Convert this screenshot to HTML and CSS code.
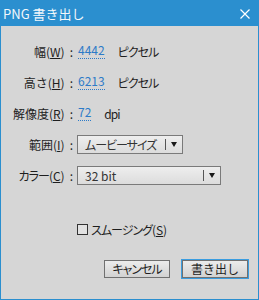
FILE: index.html
```html
<!DOCTYPE html>
<html lang="ja">
<head>
    <meta charset="UTF-8">
    <meta name="viewport" content="width=device-width, initial-scale=1.0">
    <title>PNG 書き出し</title>
    <link rel="stylesheet" href="styles.css">
</head>
<body>
    <div class="window">
        <div class="titlebar">
            <span class="title">PNG 書き出し</span>
            <svg class="close" width="10" height="10" viewBox="0 0 10 10">
                <path d="M0.5 0.5 L9.5 9.5 M9.5 0.5 L0.5 9.5" stroke="#ffffff" stroke-width="1.2" fill="none"/>
            </svg>
        </div>

        <div class="content">
            <div class="form">
                <label class="lbl">幅(<u>W</u>)<span class="colon">:</span></label>
                <div class="val"><span class="num">4442</span><span class="unit">ピクセル</span></div>

                <label class="lbl">高さ(<u>H</u>)<span class="colon">:</span></label>
                <div class="val"><span class="num">6213</span><span class="unit">ピクセル</span></div>

                <label class="lbl">解像度(<u>R</u>)<span class="colon">:</span></label>
                <div class="val"><span class="num">72</span><span class="unit">dpi</span></div>

                <label class="lbl">範囲(<u>I</u>)<span class="colon">:</span></label>
                <div class="val">
                    <div class="select short">
                        <span class="sel-text kana">ムービーサイズ</span>
                        <span class="sel-btn"><span class="tri"></span></span>
                    </div>
                </div>

                <label class="lbl"><span class="kana">カラー</span>(<u>C</u>)<span class="colon">:</span></label>
                <div class="val">
                    <div class="select long">
                        <span class="sel-text">32 bit</span>
                        <span class="sel-btn"><span class="tri"></span></span>
                    </div>
                </div>
            </div>

            <div class="check">
                <span class="box"></span>
                <span class="check-label"><span class="kana">スムージング</span>(<u>S</u>)</span>
            </div>

            <div class="buttons">
                <button class="btn kana">キャンセル</button>
                <button class="btn primary">書き出し</button>
            </div>
        </div>
    </div>
</body>
</html>
```

FILE: styles.css
```css
body {
    margin: 0;
    font-family: "Noto Sans CJK JP", "Noto Sans", sans-serif;
    font-size: 12px;
    color: #1e1e1e;
}
.window {
    width: 259px;
    height: 300px;
    box-sizing: border-box;
    border: 1px solid #2b8fcf;
    background: #d6d6d6;
}
.titlebar {
    height: 25px;
    background: #2b8fcf;
    display: flex;
    align-items: center;
    justify-content: space-between;
    padding: 0 9px 0 3px;
    margin: -1px -1px 0 -1px;
    border-top: 1px solid #2b8fcf;
}
.title {
    color: #f2f7fb;
    font-size: 13px;
}
.close {
    display: block;
}
.content {
    padding-top: 15px;
}
.form {
    display: grid;
    grid-template-columns: 72px 1fr;
    grid-auto-rows: 20px;
    row-gap: 11px;
    column-gap: 5px;
}
.lbl {
    display: flex;
    align-items: center;
    justify-content: flex-end;
    white-space: nowrap;
}
.colon {
    margin-left: 5px;
}
.val {
    display: flex;
    align-items: center;
}
.num {
    color: #2d7bc8;
    border-bottom: 1px dotted #2d7bc8;
    line-height: 14px;
    padding-bottom: 1px;
}
.unit {
    margin-left: 13px;
    font-feature-settings: "palt";
    letter-spacing: -1px;
}
.kana {
    font-feature-settings: "palt";
    letter-spacing: -1px;
}
.select {
    height: 19px;
    box-sizing: border-box;
    margin-left: -1px;
    border: 1px solid #7a7a7a;
    background: linear-gradient(#eeeeee, #dcdcdc);
    display: flex;
    align-items: center;
    color: #333;
}
.short {
    width: 106px;
}
.long {
    width: 144px;
}
.sel-text {
    flex: 1;
    padding-left: 7px;
    white-space: nowrap;
}
.sel-btn {
    width: 16px;
    height: 11px;
    border-left: 1px solid #555;
    display: flex;
    align-items: center;
    justify-content: center;
}
.tri {
    width: 0;
    height: 0;
    border-left: 3.5px solid transparent;
    border-right: 3.5px solid transparent;
    border-top: 5px solid #1a1a1a;
}
.check {
    display: flex;
    align-items: center;
    height: 16px;
    margin: 36px 0 0 76px;
}
.box {
    width: 11px;
    height: 11px;
    box-sizing: border-box;
    border: 1px solid #333;
    background: #e2e2e2;
    margin-right: 3px;
}
.buttons {
    display: flex;
    justify-content: flex-end;
    gap: 12px;
    margin-top: 23px;
    padding-right: 10px;
}
.btn {
    width: 66px;
    height: 18px;
    padding: 0;
    font-family: inherit;
    font-size: 12px;
    line-height: 14px;
    color: #1e1e1e;
    border: 1px solid #707070;
    background: linear-gradient(#ececec, #d2d2d2);
}
.primary {
    outline: 1px solid #3a9de0;
}
```
